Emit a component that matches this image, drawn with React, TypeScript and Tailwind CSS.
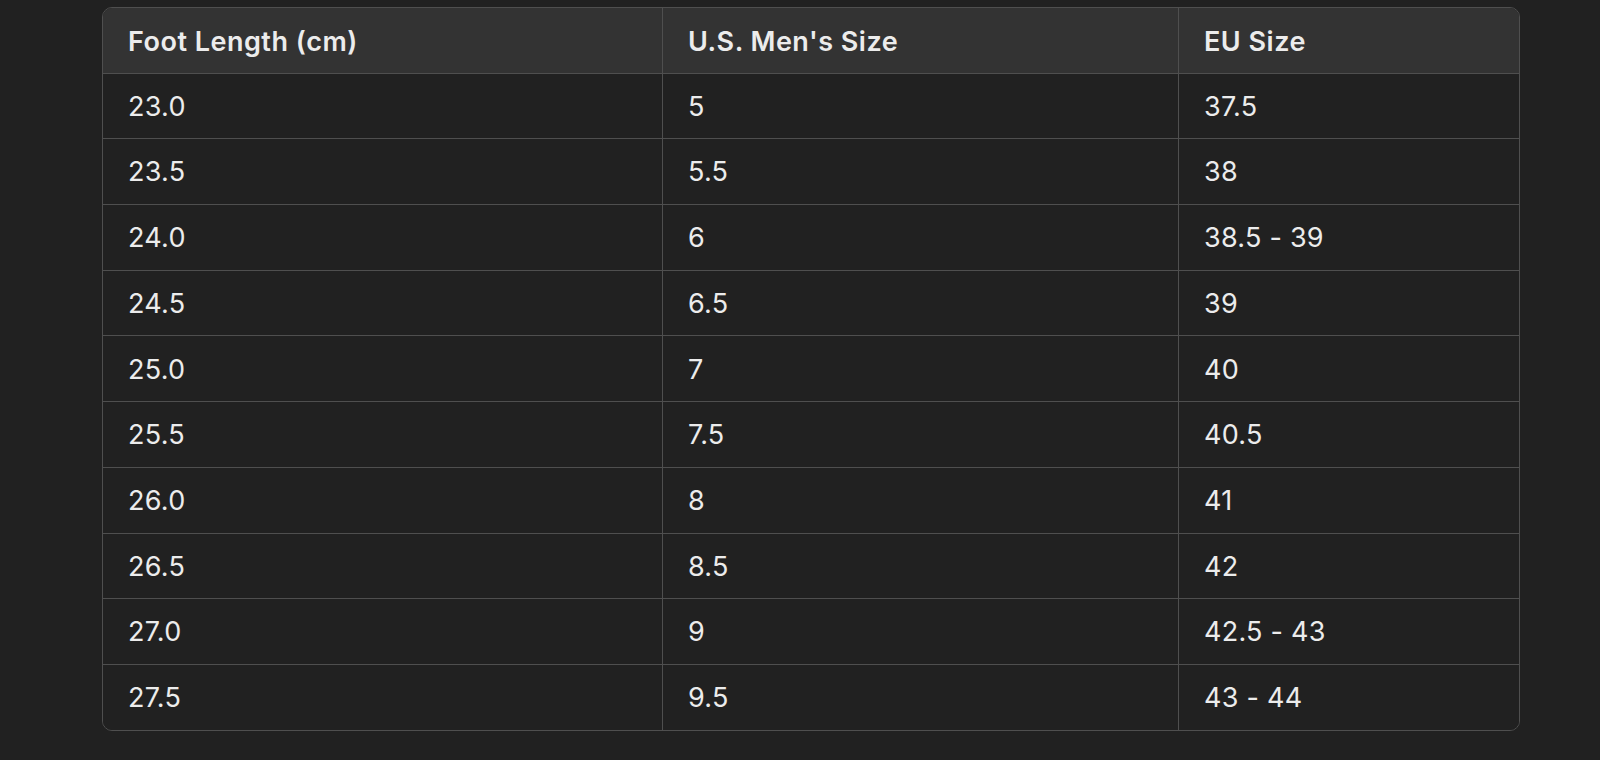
import React from "react";

const rows: [string, string, string][] = [
  ["23.0", "5", "37.5"],
  ["23.5", "5.5", "38"],
  ["24.0", "6", "38.5 - 39"],
  ["24.5", "6.5", "39"],
  ["25.0", "7", "40"],
  ["25.5", "7.5", "40.5"],
  ["26.0", "8", "41"],
  ["26.5", "8.5", "42"],
  ["27.0", "9", "42.5 - 43"],
  ["27.5", "9.5", "43 - 44"],
];

export default function App() {
  return (
    <div
      className="w-[1600px] h-[760px] bg-[#212121] overflow-hidden pt-[7px] pl-[102px]"
      style={{ fontFamily: "Inter, 'Noto Sans', 'Liberation Sans', sans-serif" }}
    >
      <div className="w-[1418px] rounded-[10px] border border-[#4f4f4f] overflow-hidden text-[#ececec] text-[27px]">
        <div className="grid grid-cols-[559px_516px_1fr] h-[65.7px] bg-[#333333] border-b border-[#4f4f4f] font-semibold tracking-[0.5px]">
          <div className="flex items-center pl-[25px] pt-[3px]">Foot Length (cm)</div>
          <div className="flex items-center pl-[25px] pt-[3px] border-l border-[#4f4f4f]">U.S. Men's Size</div>
          <div className="flex items-center pl-[25px] pt-[3px] border-l border-[#4f4f4f]">EU Size</div>
        </div>
        {rows.map((r, i) => (
          <div
            key={i}
            className={
              "grid grid-cols-[559px_516px_1fr] bg-[#212121] tracking-[0.25px] " +
              (i < rows.length - 1 ? "h-[65.7px] border-b border-[#4f4f4f]" : "h-[64.7px]")
            }
          >
            <div className="flex items-center pl-[25px] pt-[2px]">{r[0]}</div>
            <div className="flex items-center pl-[25px] pt-[2px] border-l border-[#4f4f4f]">{r[1]}</div>
            <div className="flex items-center pl-[25px] pt-[2px] border-l border-[#4f4f4f]">{r[2]}</div>
          </div>
        ))}
      </div>
    </div>
  );
}
